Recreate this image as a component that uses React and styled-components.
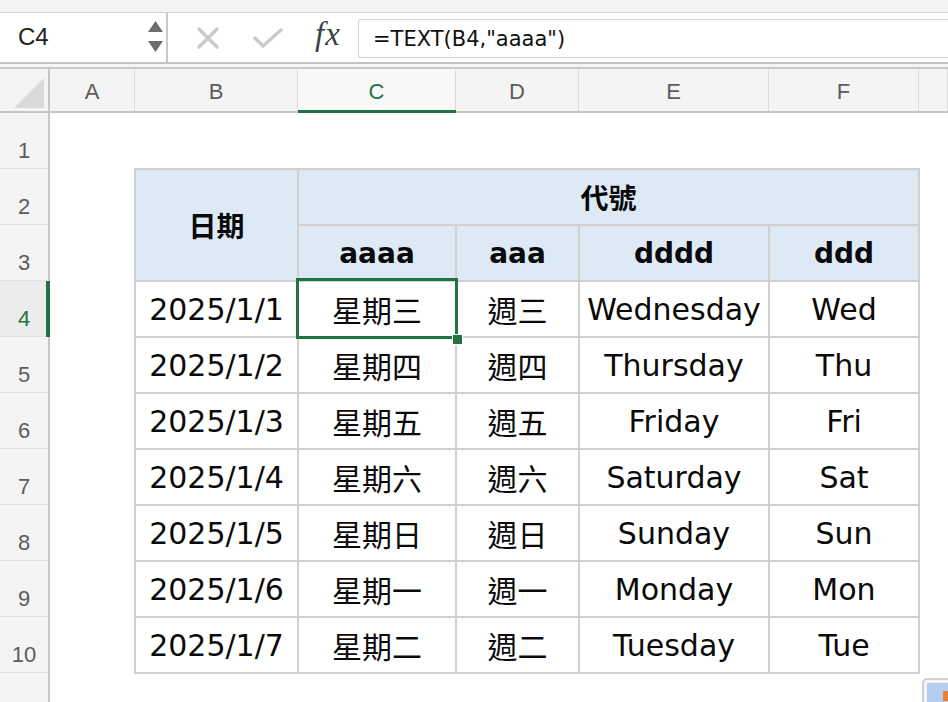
import React from "react";
import styled, { createGlobalStyle } from "styled-components";

const GlobalStyle = createGlobalStyle`
  html, body { margin: 0; padding: 0; background: #ffffff; }
  body { overflow: hidden; }
  * { box-sizing: border-box; }
`;

const GREEN = "#217346";
const BODY_FONT = `"DejaVu Sans", "Noto Sans CJK TC", sans-serif`;
const UI_FONT = `"Liberation Sans", Arial, sans-serif`;

const Frame = styled.div`
  width: 948px;
  height: 702px;
  overflow: hidden;
  position: relative;
  background: #ffffff;
  display: flex;
  flex-direction: column;
`;

const TopStrip = styled.div`
  height: 13px;
  flex: none;
  background: #f3f3f3;
  border-bottom: 1px solid #d2d2d2;
`;

const FormulaBar = styled.div`
  height: 51px;
  flex: none;
  display: flex;
  background: #ffffff;
  border-bottom: 2px solid #c4c4c4;
`;

const NameBox = styled.div`
  width: 168px;
  flex: none;
  display: flex;
  align-items: center;
  justify-content: space-between;
  padding: 0 3px 0 18px;
  border-right: 2px solid #c8c8c8;
`;

const NameText = styled.span`
  font-family: ${UI_FONT};
  font-size: 24px;
  color: #222;
  margin-top: -2px;
`;

const Spinner = styled.div`
  display: flex;
  flex-direction: column;
  gap: 9px;
  margin-top: -3px;
`;

const Actions = styled.div`
  display: flex;
  align-items: center;
  width: 190px;
  flex: none;
  padding-left: 29px;
`;

const ActionIcon = styled.div`
  width: ${(p) => p.$w}px;
  display: flex;
  align-items: center;
  justify-content: flex-start;
`;

const Fx = styled.span`
  font-family: "Liberation Serif", "DejaVu Serif", serif;
  font-style: italic;
  font-size: 33px;
  color: #3f3f3f;
  margin-top: -6px;
  letter-spacing: 1px;
`;

const FormulaInput = styled.div`
  flex: 1;
  margin: 6px 0 4px 0;
  border: 1px solid #d4d4d4;
  border-right: none;
  border-radius: 3px 0 0 3px;
  display: flex;
  align-items: center;
  padding-left: 14px;
  font-family: ${BODY_FONT};
  font-size: 21px;
  color: #111;
`;

const HeaderGap = styled.div`
  height: 5px;
  flex: none;
  background: #f6f6f6;
  border-bottom: 2px solid #c8c8c8;
`;

const ColumnHeaderRow = styled.div`
  height: 44px;
  flex: none;
  display: flex;
  background: #f4f4f4;
  border-bottom: 2px solid #c6c6c6;
`;

const Corner = styled.div`
  width: 50px;
  flex: none;
  border-right: 2px solid #c6c6c6;
  display: flex;
  align-items: flex-end;
  justify-content: flex-end;
  padding: 0 4px 3px 0;
`;

const ColHead = styled.div`
  width: ${(p) => (p.$w ? `${p.$w}px` : "auto")};
  flex: ${(p) => (p.$w ? "none" : "1")};
  position: relative;
  display: flex;
  align-items: center;
  justify-content: center;
  padding-top: 3px;
  border-right: 1px solid #dadada;
  font-family: ${UI_FONT};
  font-size: 22px;
  color: ${(p) => (p.$active ? GREEN : "#5c5c5c")};
  background: ${(p) => (p.$active ? "#f8f8f8" : "transparent")};
  &::after {
    content: "";
    display: ${(p) => (p.$active ? "block" : "none")};
    position: absolute;
    left: 0;
    right: -1px;
    bottom: -2px;
    height: 3px;
    background: ${GREEN};
  }
`;

const Body = styled.div`
  flex: 1;
  display: flex;
  overflow: hidden;
`;

const RowHeaders = styled.div`
  width: 50px;
  flex: none;
  border-right: 2px solid #c6c6c6;
  background: #f4f4f4;
  display: flex;
  flex-direction: column;
`;

const RowHead = styled.div`
  height: 56px;
  flex: none;
  position: relative;
  display: flex;
  align-items: flex-end;
  justify-content: center;
  padding-bottom: 4px;
  border-bottom: 1px solid #e2e2e2;
  font-family: ${UI_FONT};
  font-size: 22px;
  color: ${(p) => (p.$active ? GREEN : "#5c5c5c")};
  background: ${(p) => (p.$active ? "#ececec" : "transparent")};
  &::after {
    content: "";
    display: ${(p) => (p.$active ? "block" : "none")};
    position: absolute;
    top: 0;
    bottom: -1px;
    right: -2px;
    width: 4px;
    background: ${GREEN};
  }
`;

const SheetArea = styled.div`
  flex: 1;
  padding: 55px 0 0 84px;
`;

const Table = styled.div`
  display: grid;
  width: max-content;
  grid-template-columns: 161px 156px 121px 188px 148px;
  grid-auto-rows: 54px;
  gap: 2px;
  padding: 2px;
  background: #d0d0d0;
`;

const Cell = styled.div`
  position: relative;
  z-index: ${(p) => (p.$selected ? 2 : "auto")};
  display: flex;
  align-items: center;
  justify-content: center;
  background: ${(p) => (p.$head ? "#dee9f6" : "#ffffff")};
  font-family: ${BODY_FONT};
  font-size: ${(p) => (p.$head ? 28 : 30)}px;
  font-weight: ${(p) => (p.$head ? 700 : 400)};
  color: #0a0a0a;
  grid-column: ${(p) => p.$col || "auto"};
  grid-row: ${(p) => p.$row || "auto"};
  white-space: nowrap;
`;

const Selection = styled.div`
  position: absolute;
  left: -3px;
  right: -3px;
  top: -4px;
  bottom: -3px;
  border: 3px solid ${GREEN};
  pointer-events: none;
`;

const FillHandle = styled.div`
  position: absolute;
  width: 11px;
  height: 11px;
  right: -8px;
  bottom: -9px;
  background: ${GREEN};
  border: 1px solid #ffffff;
`;

const PasteButton = styled.div`
  position: absolute;
  left: 922px;
  top: 678px;
  width: 30px;
  height: 30px;
`;

const columns = [
  { key: "A", w: 85 },
  { key: "B", w: 163 },
  { key: "C", w: 158, active: true },
  { key: "D", w: 123 },
  { key: "E", w: 190 },
  { key: "F", w: 150 },
  { key: "", w: 0 },
];

const data = [
  ["2025/1/1", "星期三", "週三", "Wednesday", "Wed"],
  ["2025/1/2", "星期四", "週四", "Thursday", "Thu"],
  ["2025/1/3", "星期五", "週五", "Friday", "Fri"],
  ["2025/1/4", "星期六", "週六", "Saturday", "Sat"],
  ["2025/1/5", "星期日", "週日", "Sunday", "Sun"],
  ["2025/1/6", "星期一", "週一", "Monday", "Mon"],
  ["2025/1/7", "星期二", "週二", "Tuesday", "Tue"],
];

export default function App() {
  return (
    <>
      <GlobalStyle />
      <Frame>
        <TopStrip />
        <FormulaBar>
          <NameBox>
            <NameText>C4</NameText>
            <Spinner>
              <svg width="15" height="11" viewBox="0 0 15 11">
                <path d="M7.5 0 L15 11 L0 11 Z" fill="#6e6e6e" />
              </svg>
              <svg width="15" height="11" viewBox="0 0 15 11">
                <path d="M0 0 L15 0 L7.5 11 Z" fill="#6e6e6e" />
              </svg>
            </Spinner>
          </NameBox>
          <Actions>
            <ActionIcon $w={56}>
              <svg width="22" height="22" viewBox="0 0 22 22">
                <path d="M2 2 L20 20 M20 2 L2 20" stroke="#cacaca" strokeWidth="3.5" strokeLinecap="round" />
              </svg>
            </ActionIcon>
            <ActionIcon $w={62}>
              <svg width="30" height="22" viewBox="0 0 30 22">
                <path d="M2 11 L10 19 L28 3" stroke="#cacaca" strokeWidth="3.5" fill="none" strokeLinecap="round" strokeLinejoin="round" />
              </svg>
            </ActionIcon>
            <ActionIcon $w={40}>
              <Fx>fx</Fx>
            </ActionIcon>
          </Actions>
          <FormulaInput>=TEXT(B4,"aaaa")</FormulaInput>
        </FormulaBar>
        <HeaderGap />
        <ColumnHeaderRow>
          <Corner>
            <svg width="30" height="30" viewBox="0 0 30 30">
              <path d="M30 0 L30 30 L0 30 Z" fill="#dadada" />
            </svg>
          </Corner>
          {columns.map((c, i) => (
            <ColHead key={i} $w={c.w} $active={c.active}>
              {c.key}
            </ColHead>
          ))}
        </ColumnHeaderRow>
        <Body>
          <RowHeaders>
            {Array.from({ length: 11 }, (_, i) => (
              <RowHead key={i} $active={i + 1 === 4}>
                {i + 1}
              </RowHead>
            ))}
          </RowHeaders>
          <SheetArea>
            <Table>
              <Cell $head $col="1" $row="1 / span 2">日期</Cell>
              <Cell $head $col="2 / span 4" $row="1">代號</Cell>
              <Cell $head $col="2" $row="2">aaaa</Cell>
              <Cell $head $col="3" $row="2">aaa</Cell>
              <Cell $head $col="4" $row="2">dddd</Cell>
              <Cell $head $col="5" $row="2">ddd</Cell>
              {data.map((row, r) =>
                row.map((v, c) => {
                  const selected = r === 0 && c === 1;
                  return (
                    <Cell key={`${r}-${c}`} $col={`${c + 1}`} $row={`${r + 3}`} $selected={selected}>
                      {v}
                      {selected && (
                        <Selection>
                          <FillHandle />
                        </Selection>
                      )}
                    </Cell>
                  );
                })
              )}
            </Table>
          </SheetArea>
        </Body>
        <PasteButton>
          <svg width="30" height="30" viewBox="0 0 30 30">
            <rect x="1" y="1" width="28" height="28" rx="4" fill="#f4f4f4" stroke="#c2c2c2" strokeWidth="1.5" />
            <rect x="5" y="5" width="22" height="22" rx="1" fill="#b5cdef" />
            <rect x="21" y="13" width="6" height="10" fill="#e8823a" />
          </svg>
        </PasteButton>
      </Frame>
    </>
  );
}
